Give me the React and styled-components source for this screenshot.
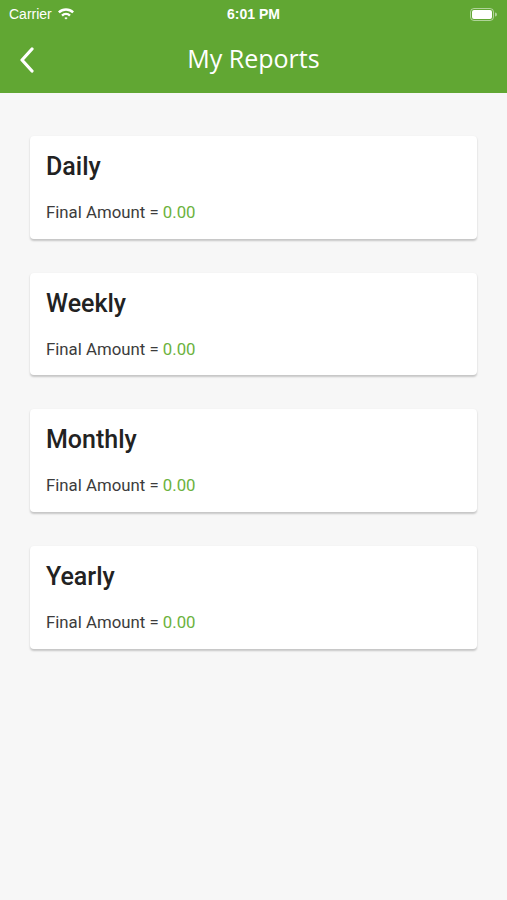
import React from 'react';
import styled, { createGlobalStyle } from 'styled-components';

const Global = createGlobalStyle`
  html, body { margin: 0; padding: 0; }
  body {
    background: #f7f7f7;
    font-family: Roboto, "Liberation Sans", sans-serif;
  }
`;

const reports = ['Daily', 'Weekly', 'Monthly', 'Yearly'];

const App = () => {
  return (
    <Page>
      <Global />
      <Header>
        <StatusBar>
          <Carrier>
            Carrier
            <svg width="18" height="13" viewBox="0 0 18 13">
              <path d="M1 4.5 A11.5 11.5 0 0 1 17 4.5 L15.3 6.2 A9 9 0 0 0 2.7 6.2 Z" fill="#fff" />
              <path d="M4.2 7.7 A6.8 6.8 0 0 1 13.8 7.7 L12.1 9.4 A4.4 4.4 0 0 0 5.9 9.4 Z" fill="#fff" />
              <path d="M7.4 10.9 A2.3 2.3 0 0 1 10.6 10.9 L9 12.5 Z" fill="#fff" />
            </svg>
          </Carrier>
          <Time>6:01 PM</Time>
          <Battery>
            <svg width="27" height="13" viewBox="0 0 27 13">
              <rect x="0.5" y="0.5" width="23" height="12" rx="3.5" fill="none" stroke="rgba(255,255,255,0.5)" />
              <rect x="2" y="2" width="20" height="9" rx="2" fill="#fff" />
              <path d="M25 4.5 v4 a2 2 0 0 0 0 -4 z" fill="rgba(255,255,255,0.5)" />
            </svg>
          </Battery>
        </StatusBar>
        <NavBar>
          <BackButton>
            <svg width="16" height="26" viewBox="0 0 16 26">
              <path d="M13 2 L3 13 L13 24" fill="none" stroke="#fff" strokeWidth="3.2" strokeLinecap="round" strokeLinejoin="round" />
            </svg>
          </BackButton>
          <Title>My Reports</Title>
        </NavBar>
      </Header>
      <List>
        {reports.map((r) => (
          <Card key={r}>
            <CardTitle>{r}</CardTitle>
            <Amount>
              Final Amount = <Value>0.00</Value>
            </Amount>
          </Card>
        ))}
      </List>
    </Page>
  );
};

const Page = styled.div`
  min-height: 900px;
  background: #f7f7f7;
`;

const Header = styled.div`
  background: #61a733;
  color: #fff;
`;

const StatusBar = styled.div`
  height: 28px;
  display: flex;
  align-items: center;
  justify-content: space-between;
  padding: 0 10px 0 9px;
  position: relative;
  font-family: "Liberation Sans", sans-serif;
  font-size: 14px;
`;

const Carrier = styled.div`
  display: flex;
  align-items: center;
  gap: 5px;
  color: #fff;
  svg { margin-top: -2px; }
`;

const Time = styled.div`
  position: absolute;
  left: 0;
  right: 0;
  text-align: center;
  font-weight: bold;
  pointer-events: none;
`;

const Battery = styled.div`
  display: flex;
  align-items: center;
`;

const NavBar = styled.div`
  height: 65px;
  display: flex;
  align-items: center;
  position: relative;
`;

const BackButton = styled.div`
  position: absolute;
  left: 19px;
  top: 19px;
  display: flex;
`;

const Title = styled.div`
  flex: 1;
  text-align: center;
  font-family: "Open Sans", sans-serif;
  font-size: 25px;
  font-weight: 500;
  margin-top: -5px;
`;

const List = styled.div`
  display: flex;
  flex-direction: column;
  gap: 34.2px;
  padding: 43px 30px;
`;

const Card = styled.div`
  background: #fff;
  border-radius: 4px;
  box-shadow: 0 1.5px 2px rgba(0, 0, 0, 0.2);
  padding: 16px 16px 16.5px;
  display: flex;
  flex-direction: column;
  gap: 20px;
`;

const CardTitle = styled.div`
  font-size: 25px;
  line-height: 30px;
  color: #222;
  font-weight: 500;
`;

const Amount = styled.div`
  font-size: 16.8px;
  line-height: 20px;
  color: #3c3c3c;
`;

const Value = styled.span`
  color: #6cb23e;
`;

export default App;
